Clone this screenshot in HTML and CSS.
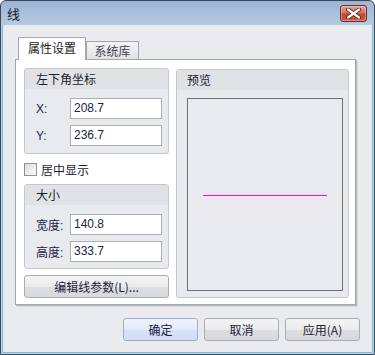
FILE: index.html
```html
<!DOCTYPE html>
<html lang="zh-cn">
<head>
  <meta charset="UTF-8">
  <title>线</title>
  <link rel="stylesheet" href="styles.css">
</head>
<body>
  <div class="window">
    <div class="titlebar">
      <span class="title">线</span>
      <div class="close">
        <svg width="15" height="11" viewBox="0 0 15 11">
          <path d="M2 1.5 L13 9.5 M13 1.5 L2 9.5" stroke="#5a2020" stroke-width="4" stroke-linecap="round"/>
          <path d="M2 1.5 L13 9.5 M13 1.5 L2 9.5" stroke="#ffffff" stroke-width="2.2" stroke-linecap="round"/>
        </svg>
      </div>
    </div>
    <div class="client">
      <div class="tabs">
        <div class="tab active">属性设置</div>
        <div class="tab">系统库</div>
      </div>
      <div class="panel">
        <div class="left">
          <div class="group g1">
            <div class="group-head">左下角坐标</div>
            <div class="group-body">
              <div class="row"><span class="label">X:</span><div class="input">208.7</div></div>
              <div class="row"><span class="label">Y:</span><div class="input">236.7</div></div>
            </div>
          </div>
          <div class="check">
            <span class="box"></span>
            <span>居中显示</span>
          </div>
          <div class="group g2">
            <div class="group-head">大小</div>
            <div class="group-body">
              <div class="row"><span class="label">宽度:</span><div class="input">140.8</div></div>
              <div class="row"><span class="label">高度:</span><div class="input">333.7</div></div>
            </div>
          </div>
          <div class="btn wide">编辑线参数(L)...</div>
        </div>
        <div class="group preview">
          <div class="group-head">预览</div>
          <div class="preview-body">
            <div class="frame"><div class="line"></div></div>
          </div>
        </div>
      </div>
      <div class="buttons">
        <div class="btn default">确定</div>
        <div class="btn">取消</div>
        <div class="btn">应用(A)</div>
      </div>
    </div>
  </div>
</body>
</html>
```

FILE: styles.css
```css
body { margin: 0; font-family: "Liberation Sans", "Noto Sans CJK SC", sans-serif; font-size: 12px; color: #1e2236; }
.window { width: 375px; height: 355px; box-sizing: border-box; border: 1px solid #3d4758; border-radius: 6px 6px 0 0; background: linear-gradient(#9cb5d4, #bcd0e8 30px, #c0d4ea); display: flex; flex-direction: column; overflow: hidden; }
.titlebar { height: 24px; flex: none; display: flex; align-items: center; padding-left: 6px; }
.title { font-family: "Noto Sans CJK SC", sans-serif; font-size: 13px; color: #14181f; }
.close { margin-left: auto; margin-right: 7px; width: 25px; height: 15px; border: 1px solid #6b2a26; border-radius: 3px; background: linear-gradient(#e8a392, #d2705d 45%, #c0452f 55%, #c95a3f); display: flex; align-items: center; justify-content: center; box-shadow: inset 0 0 0 1px rgba(255,255,255,0.35); }
.client { flex: 1; margin: 0 1px 1px; border: 1px solid #62c2e8; border-top: none; background: #eaebef; padding: 12px 12px 0 12px; display: flex; flex-direction: column; }
.tabs { display: flex; align-items: flex-end; margin-left: 3px; margin-bottom: -1px; position: relative; z-index: 1; }
.tab { height: 17px; width: 51px; margin-bottom: 1px; border: 1px solid #a3a6ab; border-bottom: none; background: linear-gradient(#f4f4f5, #e2e3e6); font-family: "Noto Sans CJK SC", sans-serif; color: #3e4250; text-align: center; line-height: 17px; }
.tab.active { height: 22px; width: 66px; margin-bottom: 0; background: #fff; color: #1a1c24; line-height: 20px; font-size: 12px; }
.panel { width: 341px; height: 246px; box-sizing: border-box; border: 1px solid #a3a6ab; background: #fff; box-shadow: 1px 1px 0 #b8bbc0, 2px 2px 0 #d6d8dc; padding: 8px 6px 6px 8px; display: flex; gap: 7px; }
.left { width: 145px; display: flex; flex-direction: column; }
.group { border: 1px solid #c4c7cd; border-radius: 3px; background: #e9eaee; font-family: "Noto Sans CJK SC", sans-serif; }
.group-head { height: 20px; line-height: 20px; padding-left: 11px; background: #e1e2e6; border-radius: 3px 3px 0 0; color: #1a1c2a; }
.group-body { padding: 9px 6px 6px 11px; display: flex; flex-direction: column; gap: 6px; }
.g1 .group-body { padding-bottom: 7px; }
.row { display: flex; align-items: center; }
.label { width: 34px; font-family: "Liberation Sans", "Noto Sans CJK SC", sans-serif; color: #1c2346; }
.input { width: 92px; height: 21px; box-sizing: border-box; border: 1px solid #acb0b6; background: #fff; padding-left: 3px; line-height: 19px; font-family: "Liberation Sans", sans-serif; color: #1c2346; }
.check { margin-top: 9px; height: 13px; display: flex; align-items: center; gap: 4px; font-family: "Noto Sans CJK SC", sans-serif; }
.box { width: 13px; height: 13px; box-sizing: border-box; border: 1px solid #8e9196; background: linear-gradient(135deg, #dcdde0, #fbfbfb); }
.g2 { margin-top: 8px; }
.btn { width: 75px; height: 23px; box-sizing: border-box; border: 1px solid #a9adb3; border-radius: 3px; background: linear-gradient(#f4f4f5, #ebebed 50%, #dddee1 51%, #d8d9dc); display: flex; align-items: center; justify-content: center; font-family: "Noto Sans CJK SC", sans-serif; color: #1e2236; }
.btn.wide { width: 145px; height: 24px; margin-top: 6px; }
.btn.default { border-color: #9eaec4; background: linear-gradient(#eef3fd, #e2eafb 50%, #d6e2f8 51%, #d3def6); }
.preview { width: 173px; margin-top: 1px; box-sizing: border-box; }
.preview .group-head { padding-left: 10px; }
.preview-body { padding: 8px 5px 6px 10px; }
.frame { height: 193px; box-sizing: border-box; border: 1px solid #6e7074; display: flex; align-items: center; justify-content: center; padding-top: 2px; }
.line { width: 124px; height: 1px; background: #ff00ff; }
.buttons { margin-top: 13px; display: flex; justify-content: flex-end; gap: 6px; }
```
